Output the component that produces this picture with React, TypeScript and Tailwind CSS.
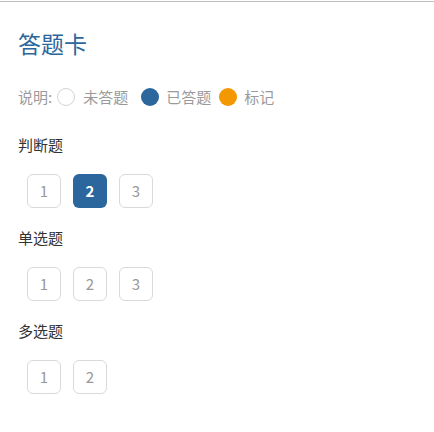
import React from 'react';

const sections = [
  { title: '判断题', count: 3, answered: [2] },
  { title: '单选题', count: 3, answered: [] as number[] },
  { title: '多选题', count: 2, answered: [] as number[] },
];

const App: React.FC = () => {
  return (
    <div
      className="w-[434px] h-[432px] bg-white border-t border-[#bdbdbd] mt-px"
      style={{ fontFamily: '"Noto Sans CJK SC", "Noto Sans", sans-serif' }}
    >
      <div className="pl-[18px] pt-[25px]">
        <h1 className="text-[23px] leading-[32px] text-[#2b679c] font-normal">答题卡</h1>

        {/* legend */}
        <div className="flex items-center h-[20px] mt-[28px] text-[15px] leading-[20px] text-[#9a9a9a]">
          <span>说明:</span>
          <span className="ml-[5px] w-[18px] h-[18px] rounded-full border border-[#d4d4d4] bg-white" />
          <span className="ml-[8px]">未答题</span>
          <span className="ml-[13px] w-[18px] h-[18px] rounded-full bg-[#2b679c]" />
          <span className="ml-[7px]">已答题</span>
          <span className="ml-[8px] w-[18px] h-[18px] rounded-full bg-[#f39800]" />
          <span className="ml-[7px]">标记</span>
        </div>

        <div className="mt-[28px] flex flex-col gap-[20px]">
          {sections.map((s) => (
            <div key={s.title}>
              <div className="text-[15px] leading-[20px] text-[#333]">{s.title}</div>
              <div className="flex gap-[12px] ml-[9px] mt-[19px]">
                {Array.from({ length: s.count }, (_, i) => i + 1).map((n) => {
                  const done = s.answered.includes(n);
                  return (
                    <div
                      key={n}
                      className={
                        done
                          ? 'w-[34px] h-[34px] rounded-[6px] bg-[#2b679c] text-white font-bold flex items-center justify-center text-[15px]'
                          : 'w-[34px] h-[34px] rounded-[6px] border border-[#d9d9d9] text-[#999] flex items-center justify-center text-[15px]'
                      }
                    >
                      {n}
                    </div>
                  );
                })}
              </div>
            </div>
          ))}
        </div>
      </div>
    </div>
  );
};

export default App;
